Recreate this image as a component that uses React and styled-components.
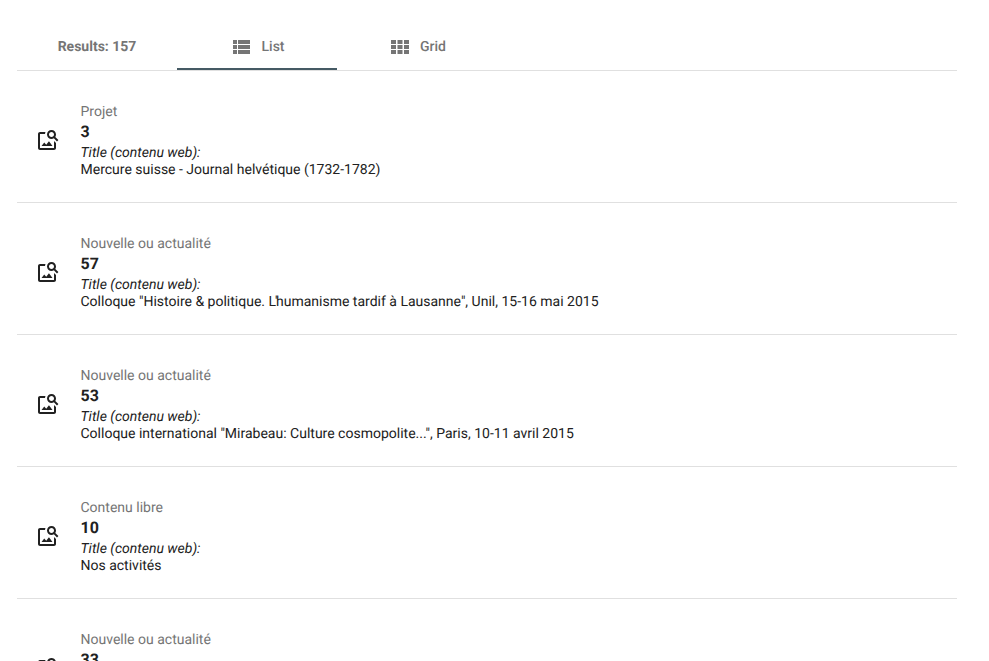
import React from 'react';
import styled, { createGlobalStyle } from 'styled-components';

const GlobalStyle = createGlobalStyle`
  html, body {
    margin: 0;
    height: 100%;
    overflow: hidden;
    background: #fff;
    font-family: Roboto, "Liberation Sans", sans-serif;
    text-rendering: geometricPrecision;
  }
`;

const Page = styled.div`
  width: 940px;
  padding: 22px 0 0 17px;
`;

const Tabs = styled.div`
  display: flex;
  height: 48px;
  border-bottom: 1px solid #e0e0e0;
`;

const Tab = styled.div`
  width: 160px;
  height: 48px;
  box-sizing: border-box;
  padding-top: 1px;
  padding-left: ${(p) => (p.$bold ? 0 : 3)}px;
  display: flex;
  align-items: center;
  justify-content: center;
  gap: ${(p) => p.$gap || 12}px;
  font-size: 14px;
  font-weight: ${(p) => (p.$bold ? 700 : 500)};
  color: #757575;
  box-shadow: ${(p) => (p.$active ? 'inset 0 -2px 0 #455a64' : 'none')};
`;

const Row = styled.div`
  height: 100px;
  padding-top: 31px;
  display: flex;
  align-items: flex-start;
  border-bottom: 1px solid #e0e0e0;
`;

const IconCell = styled.div`
  width: 64px;
  padding: 26px 0 0 19px;
  box-sizing: border-box;
  display: flex;
  color: #212121;
`;

const Body = styled.div`
  display: flex;
  flex-direction: column;
  margin-left: -0.5px;
`;

const Kind = styled.div`
  font-size: 14px;
  line-height: 20px;
  color: #757575;
`;

const Id = styled.div`
  font-size: 16px;
  line-height: 20px;
  font-weight: 700;
  color: #212121;
`;

const FieldLabel = styled.div`
  margin-top: 3px;
  font-size: 14px;
  line-height: 17px;
  font-style: italic;
  color: #212121;
`;

const FieldValue = styled.div`
  font-size: 14px;
  line-height: 17px;
  color: #212121;
`;

/* the apostrophe in L'humanisme sits tight against its neighbours */
const Apostrophe = styled.span`
  margin: 0 -1.5px 0 -1px;
`;

const ListIcon = () => (
  <svg width="17" height="14" viewBox="0 0 17 14" fill="#757575">
    <rect x="0" y="0" width="4" height="4" />
    <rect x="5" y="0" width="12" height="4" />
    <rect x="0" y="5" width="4" height="4" />
    <rect x="5" y="5" width="12" height="4" />
    <rect x="0" y="10" width="4" height="4" />
    <rect x="5" y="10" width="12" height="4" />
  </svg>
);

const GridIcon = () => (
  <svg width="18" height="14" viewBox="0 0 18 14" fill="#757575">
    {[0, 6.5, 13].map((x) =>
      [0, 5, 10].map((y) => <rect key={`${x}-${y}`} x={x} y={y} width="5" height="4" />)
    )}
  </svg>
);

const ImageSearchIcon = () => (
  <svg width="24" height="24" viewBox="0 0 24 24" fill="currentColor">
    <path d="M18 13v7H4V6h5.02c.05-.71.22-1.38.48-2H4c-1.1 0-2 .9-2 2v14c0 1.1.9 2 2 2h14c1.1 0 2-.9 2-2v-5l-2-2zm-1.5 5h-11l2.75-3.53 1.96 2.36 2.75-3.54zm2.8-9.11c.44-.7.7-1.51.7-2.39C20 4.01 17.99 2 15.5 2S11 4.01 11 6.5s2.01 4.5 4.49 4.5c.88 0 1.7-.26 2.39-.7L21 13.42 22.42 12 19.3 8.89zM15.5 9C14.12 9 13 7.88 13 6.5S14.12 4 15.5 4 18 5.12 18 6.5 16.88 9 15.5 9z" />
  </svg>
);

const results = [
  { kind: 'Projet', id: 3, title: 'Mercure suisse - Journal helvétique (1732-1782)' },
  {
    kind: 'Nouvelle ou actualité',
    id: 57,
    title: (
      <>
        Colloque "Histoire &amp; politique. L<Apostrophe>'</Apostrophe>humanisme tardif à Lausanne", Unil, 15-16 mai 2015
      </>
    ),
  },
  { kind: 'Nouvelle ou actualité', id: 53, title: 'Colloque international "Mirabeau: Culture cosmopolite...", Paris, 10-11 avril 2015' },
  { kind: 'Contenu libre', id: 10, title: 'Nos activités' },
  { kind: 'Nouvelle ou actualité', id: 33 },
];

const App = () => (
  <Page>
    <GlobalStyle />
    <Tabs>
      <Tab $bold>Results: 157</Tab>
      <Tab $active>
        <ListIcon />
        List
      </Tab>
      <Tab $gap={11}>
        <GridIcon />
        Grid
      </Tab>
    </Tabs>
    {results.map((r) => (
      <Row key={r.id}>
        <IconCell>
          <ImageSearchIcon />
        </IconCell>
        <Body>
          <Kind>{r.kind}</Kind>
          <Id>{r.id}</Id>
          {r.title && (
            <>
              <FieldLabel>Title (contenu web):</FieldLabel>
              <FieldValue>{r.title}</FieldValue>
            </>
          )}
        </Body>
      </Row>
    ))}
  </Page>
);

export default App;
